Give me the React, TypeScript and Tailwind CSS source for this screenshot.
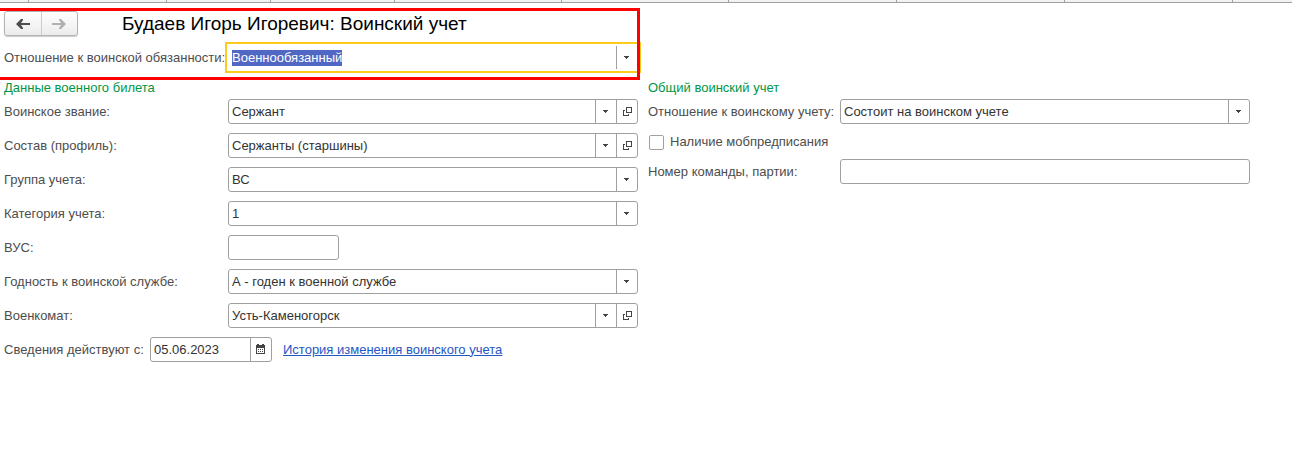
import React, { useEffect, useRef } from "react";
import clsx from "clsx";

const tabs = [
  "w-[29px]",
  "w-[138px]",
  "w-[104px]",
  "w-[124px]",
  "w-[167px]",
  "w-[167px]",
  "w-[168px]",
  "w-[168px]",
  "w-[168px]",
];

const militaryFields = [
  { id: "rank", label: "Воинское звание:", value: "Сержант", openable: true },
  {
    id: "profile",
    label: "Состав (профиль):",
    value: "Сержанты (старшины)",
    openable: true,
  },
  { id: "group", label: "Группа учета:", value: "ВС" },
  { id: "category", label: "Категория учета:", value: "1" },
  { id: "vus", label: "ВУС:", value: "", short: true },
  {
    id: "fitness",
    label: "Годность к воинской службе:",
    value: "А - годен к военной службе",
  },
  {
    id: "office",
    label: "Военкомат:",
    value: "Усть-Каменогорск",
    openable: true,
  },
];

const box = "flex h-[25px] rounded-[3px] border border-[#a0a0a0] bg-white";
const addon =
  "flex w-[21px] shrink-0 items-center justify-center border-l border-[#a0a0a0] pb-px";

const CaretIcon = () => (
  <svg
    width="5"
    height="3"
    viewBox="0 0 5 3"
    shapeRendering="crispEdges"
    className="mr-px"
  >
    <path d="M0 0h5v1H4v1H3v1H2V2H1V1H0z" fill="#444" />
  </svg>
);

const OpenIcon = () => (
  <svg
    width="9"
    height="9"
    viewBox="0 0 9 9"
    fill="none"
    stroke="#444"
    shapeRendering="crispEdges"
  >
    <path d="M3.5 0.5h5v5h-5z" />
    <path d="M2 3.5H0.5v5h5V7" />
  </svg>
);

const CalendarIcon = () => (
  <svg
    width="9"
    height="10"
    viewBox="0 0 9 10"
    shapeRendering="crispEdges"
    className="mr-px"
  >
    <path
      fillRule="evenodd"
      fill="#444"
      d="M0 1h1V0h2v1h3V0h2v1h1v9H0zM1 4v5h7V4z"
    />
    <path
      fill="#444"
      d="M2 5h1v1H2zM4 5h1v1H4zM6 5h1v1H6zM2 7h1v1H2zM4 7h1v1H4zM6 7h1v1H6z"
    />
  </svg>
);

const ArrowIcon = ({ flip }: { flip?: boolean }) => (
  <svg
    width="14"
    height="10"
    viewBox="0 0 14 10"
    className={clsx(flip && "rotate-180")}
  >
    <path d="M0 5 5 0h2v1L5 4h9v2H5l2 3v1H5z" fill="currentColor" />
  </svg>
);

interface DropdownProps {
  id: string;
  value: string;
  openable?: boolean;
}

const Dropdown = ({ id, value, openable }: DropdownProps) => {
  const ref = useRef<HTMLSelectElement>(null);

  return (
    <div className={clsx(box, "min-w-0 flex-1")}>
      <select
        id={id}
        ref={ref}
        className="min-w-0 flex-1 appearance-none bg-transparent px-[3px] text-[#333] outline-none"
      >
        <option>{value}</option>
      </select>
      <button
        type="button"
        aria-label="Выбрать"
        className={addon}
        onClick={() => ref.current?.showPicker()}
      >
        <CaretIcon />
      </button>
      {openable && (
        <button type="button" aria-label="Открыть" className={addon}>
          <OpenIcon />
        </button>
      )}
    </div>
  );
};

const App = () => {
  const dutyRef = useRef<HTMLInputElement>(null);

  useEffect(() => {
    dutyRef.current?.focus();
    dutyRef.current?.select();
  }, []);

  return (
    <div className="min-h-screen bg-white font-['Liberation_Sans',Arial,sans-serif] text-[13px] leading-4 text-[#4d4d4d]">
      <div className="flex h-[3px] overflow-hidden border-b border-[#a0a0a0] bg-[#f2f2f2]">
        {tabs.map((width, i) => (
          <span
            key={i}
            className={clsx("shrink-0 border-r border-[#a0a0a0]", width)}
          />
        ))}
      </div>

      <main className="grid grid-cols-[634fr_602fr] gap-x-2.5 pr-[42px] pl-1">
        <div className="relative col-start-1 pt-2 pb-[7px]">
          <header className="flex items-center">
            <div className="flex h-[25px] w-[74px] rounded-[3px] border border-[#b3b3b3] bg-linear-to-b from-white to-[#ececec] shadow-[0_1px_1px_#ccc]">
              <button
                type="button"
                aria-label="Назад"
                className="flex flex-1 items-center justify-center text-[#4d4d4d]"
              >
                <ArrowIcon />
              </button>
              <button
                type="button"
                aria-label="Вперед"
                className="flex flex-1 items-center justify-center border-l border-[#ccc] text-[#b0b0b0]"
              >
                <ArrowIcon flip />
              </button>
            </div>
            <h1 className="ml-11 text-[19px] leading-6 whitespace-nowrap text-black">
              Будаев Игорь Игоревич: Воинский учет
            </h1>
          </header>

          <div className="mt-1.5 -mr-[3px] flex items-center">
            <label htmlFor="duty" className="w-[221px] shrink-0 whitespace-nowrap">
              Отношение к воинской обязанности:
            </label>
            <div className="flex h-[31px] min-w-0 flex-1 border-2 border-[#fccb1d] py-0.5 pr-0.5">
              <input
                id="duty"
                ref={dutyRef}
                role="combobox"
                aria-expanded={false}
                defaultValue="Военнообязанный"
                className="min-w-0 flex-1 px-[5px] outline-none selection:bg-[#5068c4] selection:text-white"
              />
              <button type="button" aria-label="Выбрать" className={addon}>
                <CaretIcon />
              </button>
            </div>
          </div>
          <div className="pointer-events-none absolute top-[5px] -right-0.5 bottom-0 -left-1 border-[3px] border-l-0 border-[#f00]" />
        </div>

        <section className="col-start-1">
          <h2 className="text-[#009646]">Данные военного билета</h2>
          <div className="mt-[3px] space-y-[9px]">
            {militaryFields.map((field) => (
              <div key={field.id} className="flex items-center">
                <label htmlFor={field.id} className="w-56 shrink-0">
                  {field.label}
                </label>
                {field.short ? (
                  <input
                    id={field.id}
                    className={clsx(box, "w-[111px] px-[3px] outline-none")}
                  />
                ) : (
                  <Dropdown
                    id={field.id}
                    value={field.value}
                    openable={field.openable}
                  />
                )}
              </div>
            ))}
            <div className="flex items-center">
              <label htmlFor="since" className="w-[146px] shrink-0">
                Сведения действуют с:
              </label>
              <div className={clsx(box, "w-[122px]")}>
                <input
                  id="since"
                  defaultValue="05.06.2023"
                  className="min-w-0 flex-1 px-[3px] text-[#333] outline-none"
                />
                <button type="button" aria-label="Календарь" className={addon}>
                  <CalendarIcon />
                </button>
              </div>
              <a href="#history" className="ml-[11px] text-[#2456c4] underline">
                История изменения воинского учета
              </a>
            </div>
          </div>
        </section>

        <section className="col-start-2">
          <h2 className="text-[#009646]">Общий воинский учет</h2>
          <div className="mt-[3px] flex items-center">
            <label htmlFor="status" className="w-48 shrink-0">
              Отношение к воинскому учету:
            </label>
            <Dropdown id="status" value="Состоит на воинском учете" />
          </div>
          <label className="mt-[10px] flex items-center gap-1.5">
            <input
              type="checkbox"
              className="ml-px size-[15px] appearance-none rounded-[2px] border border-[#a0a0a0] checked:bg-[#a0a0a0]"
            />
            Наличие мобпредписания
          </label>
          <div className="mt-[9px] flex items-center">
            <label htmlFor="team" className="w-48 shrink-0">
              Номер команды, партии:
            </label>
            <input
              id="team"
              className={clsx(box, "min-w-0 flex-1 px-[3px] outline-none")}
            />
          </div>
        </section>
      </main>
    </div>
  );
};

export default App;
